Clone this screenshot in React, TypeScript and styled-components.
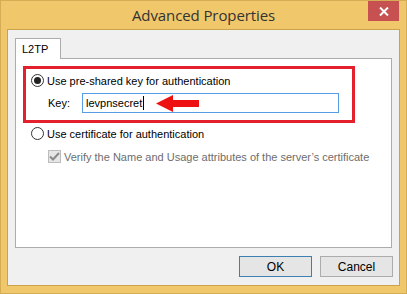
import React from 'react';
import styled, { createGlobalStyle } from 'styled-components';

const GlobalStyle = createGlobalStyle`
  html, body {
    margin: 0;
    padding: 0;
    background: #fff;
  }
  body {
    font-family: "Liberation Sans", Arial, sans-serif;
    font-size: 11px;
    color: #000;
  }
`

const Window = styled.div`
  box-sizing: border-box;
  width: 407px;
  height: 294px;
  background: #f0c86b;
  border: 1px solid #d4ad55;
  display: flex;
  flex-direction: column;
  padding: 0 6px 7px;
`

const TitleBar = styled.div`
  height: 28px;
  display: grid;
  grid-template-columns: 1fr auto 1fr;
  align-items: start;
`

const Title = styled.div`
  grid-column: 2;
  font-family: "Open Sans", "Liberation Sans", sans-serif;
  font-size: 15px;
  color: #333;
  line-height: 28px;
  letter-spacing: -0.1px;
`

const CloseButton = styled.div`
  grid-column: 3;
  justify-self: end;
  width: 31px;
  height: 20px;
  margin-right: 1px;
  background: #c75050;
  display: flex;
  align-items: center;
  justify-content: center;
`

const Client = styled.div`
  flex: 1;
  background: #f0f0f0;
  border: 1px solid #c9a24b;
  display: flex;
  flex-direction: column;
  padding: 8px 7px 8px 7px;
`

const TabStrip = styled.div`
  display: flex;
  position: relative;
  z-index: 1;
  margin-bottom: -1px;
`

const Tab = styled.div`
  box-sizing: border-box;
  width: 46px;
  height: 21px;
  background: #fff;
  border: 1px solid #acacac;
  border-bottom: none;
  padding: 4px 0 0 6px;
`

const Panel = styled.div`
  flex: 1;
  background: #fff;
  border: 1px solid #acacac;
  padding: 7px 0 0 7px;
  display: flex;
  flex-direction: column;
`

const Highlight = styled.div`
  box-sizing: border-box;
  width: 332px;
  height: 57px;
  border: 3px solid #e3202b;
  padding: 5px 0 0 5px;
  display: flex;
  flex-direction: column;
  gap: 6px;
`

const OptionRow = styled.div<{ $indent?: number; $disabled?: boolean }>`
  display: flex;
  align-items: center;
  gap: 3px;
  height: 13px;
  white-space: nowrap;
  padding-left: ${p => p.$indent ?? 0}px;
  color: ${p => (p.$disabled ? '#6d6d6d' : '#000')};
`

const Radio = styled.div<{ $checked?: boolean }>`
  box-sizing: border-box;
  flex: none;
  width: 13px;
  height: 13px;
  border-radius: 50%;
  border: 1px solid #333;
  background: #fff;
  display: flex;
  align-items: center;
  justify-content: center;

  &::after {
    content: '';
    display: ${p => (p.$checked ? 'block' : 'none')};
    width: 7px;
    height: 7px;
    border-radius: 50%;
    background: #222;
  }
`

const CheckBox = styled.div`
  box-sizing: border-box;
  flex: none;
  width: 13px;
  height: 13px;
  border: 1px solid #bcbcbc;
  background: #e6e6e6;
  display: flex;
  align-items: center;
  justify-content: center;
`

const KeyRow = styled.div`
  display: flex;
  align-items: center;
  padding-left: 17px;
`

const KeyLabel = styled.div`
  width: 34px;
`

const KeyField = styled.div`
  position: relative;
  box-sizing: border-box;
  width: 257px;
  height: 20px;
  border: 1px solid #569de5;
  padding: 0 3px;
  display: flex;
  align-items: center;
`

const Caret = styled.span`
  display: inline-block;
  width: 1px;
  height: 14px;
  background: #000;
  margin-left: 1px;
`

const Arrow = styled.svg`
  position: absolute;
  left: 73px;
  top: 1px;
`

const SecondGroup = styled.div`
  display: flex;
  flex-direction: column;
  gap: 10px;
  padding: 4px 0 0 8px;
`

const Footer = styled.div`
  display: flex;
  justify-content: flex-end;
  gap: 8px;
  padding-top: 8px;
  margin-right: -1px;
`

const Button = styled.div<{ $default?: boolean }>`
  box-sizing: border-box;
  width: 73px;
  height: 21px;
  border: 1px solid ${p => (p.$default ? '#3c7fb1' : '#acacac')};
  background: #e5e5e5;
  font-size: 12px;
  display: flex;
  align-items: center;
  justify-content: center;
`

function App() {
  return (
    <>
      <GlobalStyle />
      <Window>
        <TitleBar>
          <Title>Advanced Properties</Title>
          <CloseButton>
            <svg width="10" height="9" viewBox="0 0 10 9">
              <path d="M1 0.5 L9 8.5 M9 0.5 L1 8.5" stroke="#fff" strokeWidth="2" />
            </svg>
          </CloseButton>
        </TitleBar>
        <Client>
          <TabStrip>
            <Tab>L2TP</Tab>
          </TabStrip>
          <Panel>
            <Highlight>
              <OptionRow>
                <Radio $checked />
                <span>Use pre-shared key for authentication</span>
              </OptionRow>
              <KeyRow>
                <KeyLabel>Key:</KeyLabel>
                <KeyField>
                  <span>levpnsecret</span>
                  <Caret />
                  <Arrow width="44" height="17" viewBox="0 0 44 17">
                    <path d="M0 8.5 L17 0 L17 5 L43 5 L43 12 L17 12 L17 17 Z" fill="#ee1111" />
                  </Arrow>
                </KeyField>
              </KeyRow>
            </Highlight>
            <SecondGroup>
              <OptionRow>
                <Radio />
                <span>Use certificate for authentication</span>
              </OptionRow>
              <OptionRow $indent={17} $disabled>
                <CheckBox>
                  <svg width="11" height="9" viewBox="0 0 11 9">
                    <path d="M1 4.5 L4 7.5 L10 1" stroke="#8a8a8a" strokeWidth="2" fill="none" />
                  </svg>
                </CheckBox>
                <span>Verify the Name and Usage attributes of the server’s certificate</span>
              </OptionRow>
            </SecondGroup>
          </Panel>
          <Footer>
            <Button $default>OK</Button>
            <Button>Cancel</Button>
          </Footer>
        </Client>
      </Window>
    </>
  );
}

export default App;
